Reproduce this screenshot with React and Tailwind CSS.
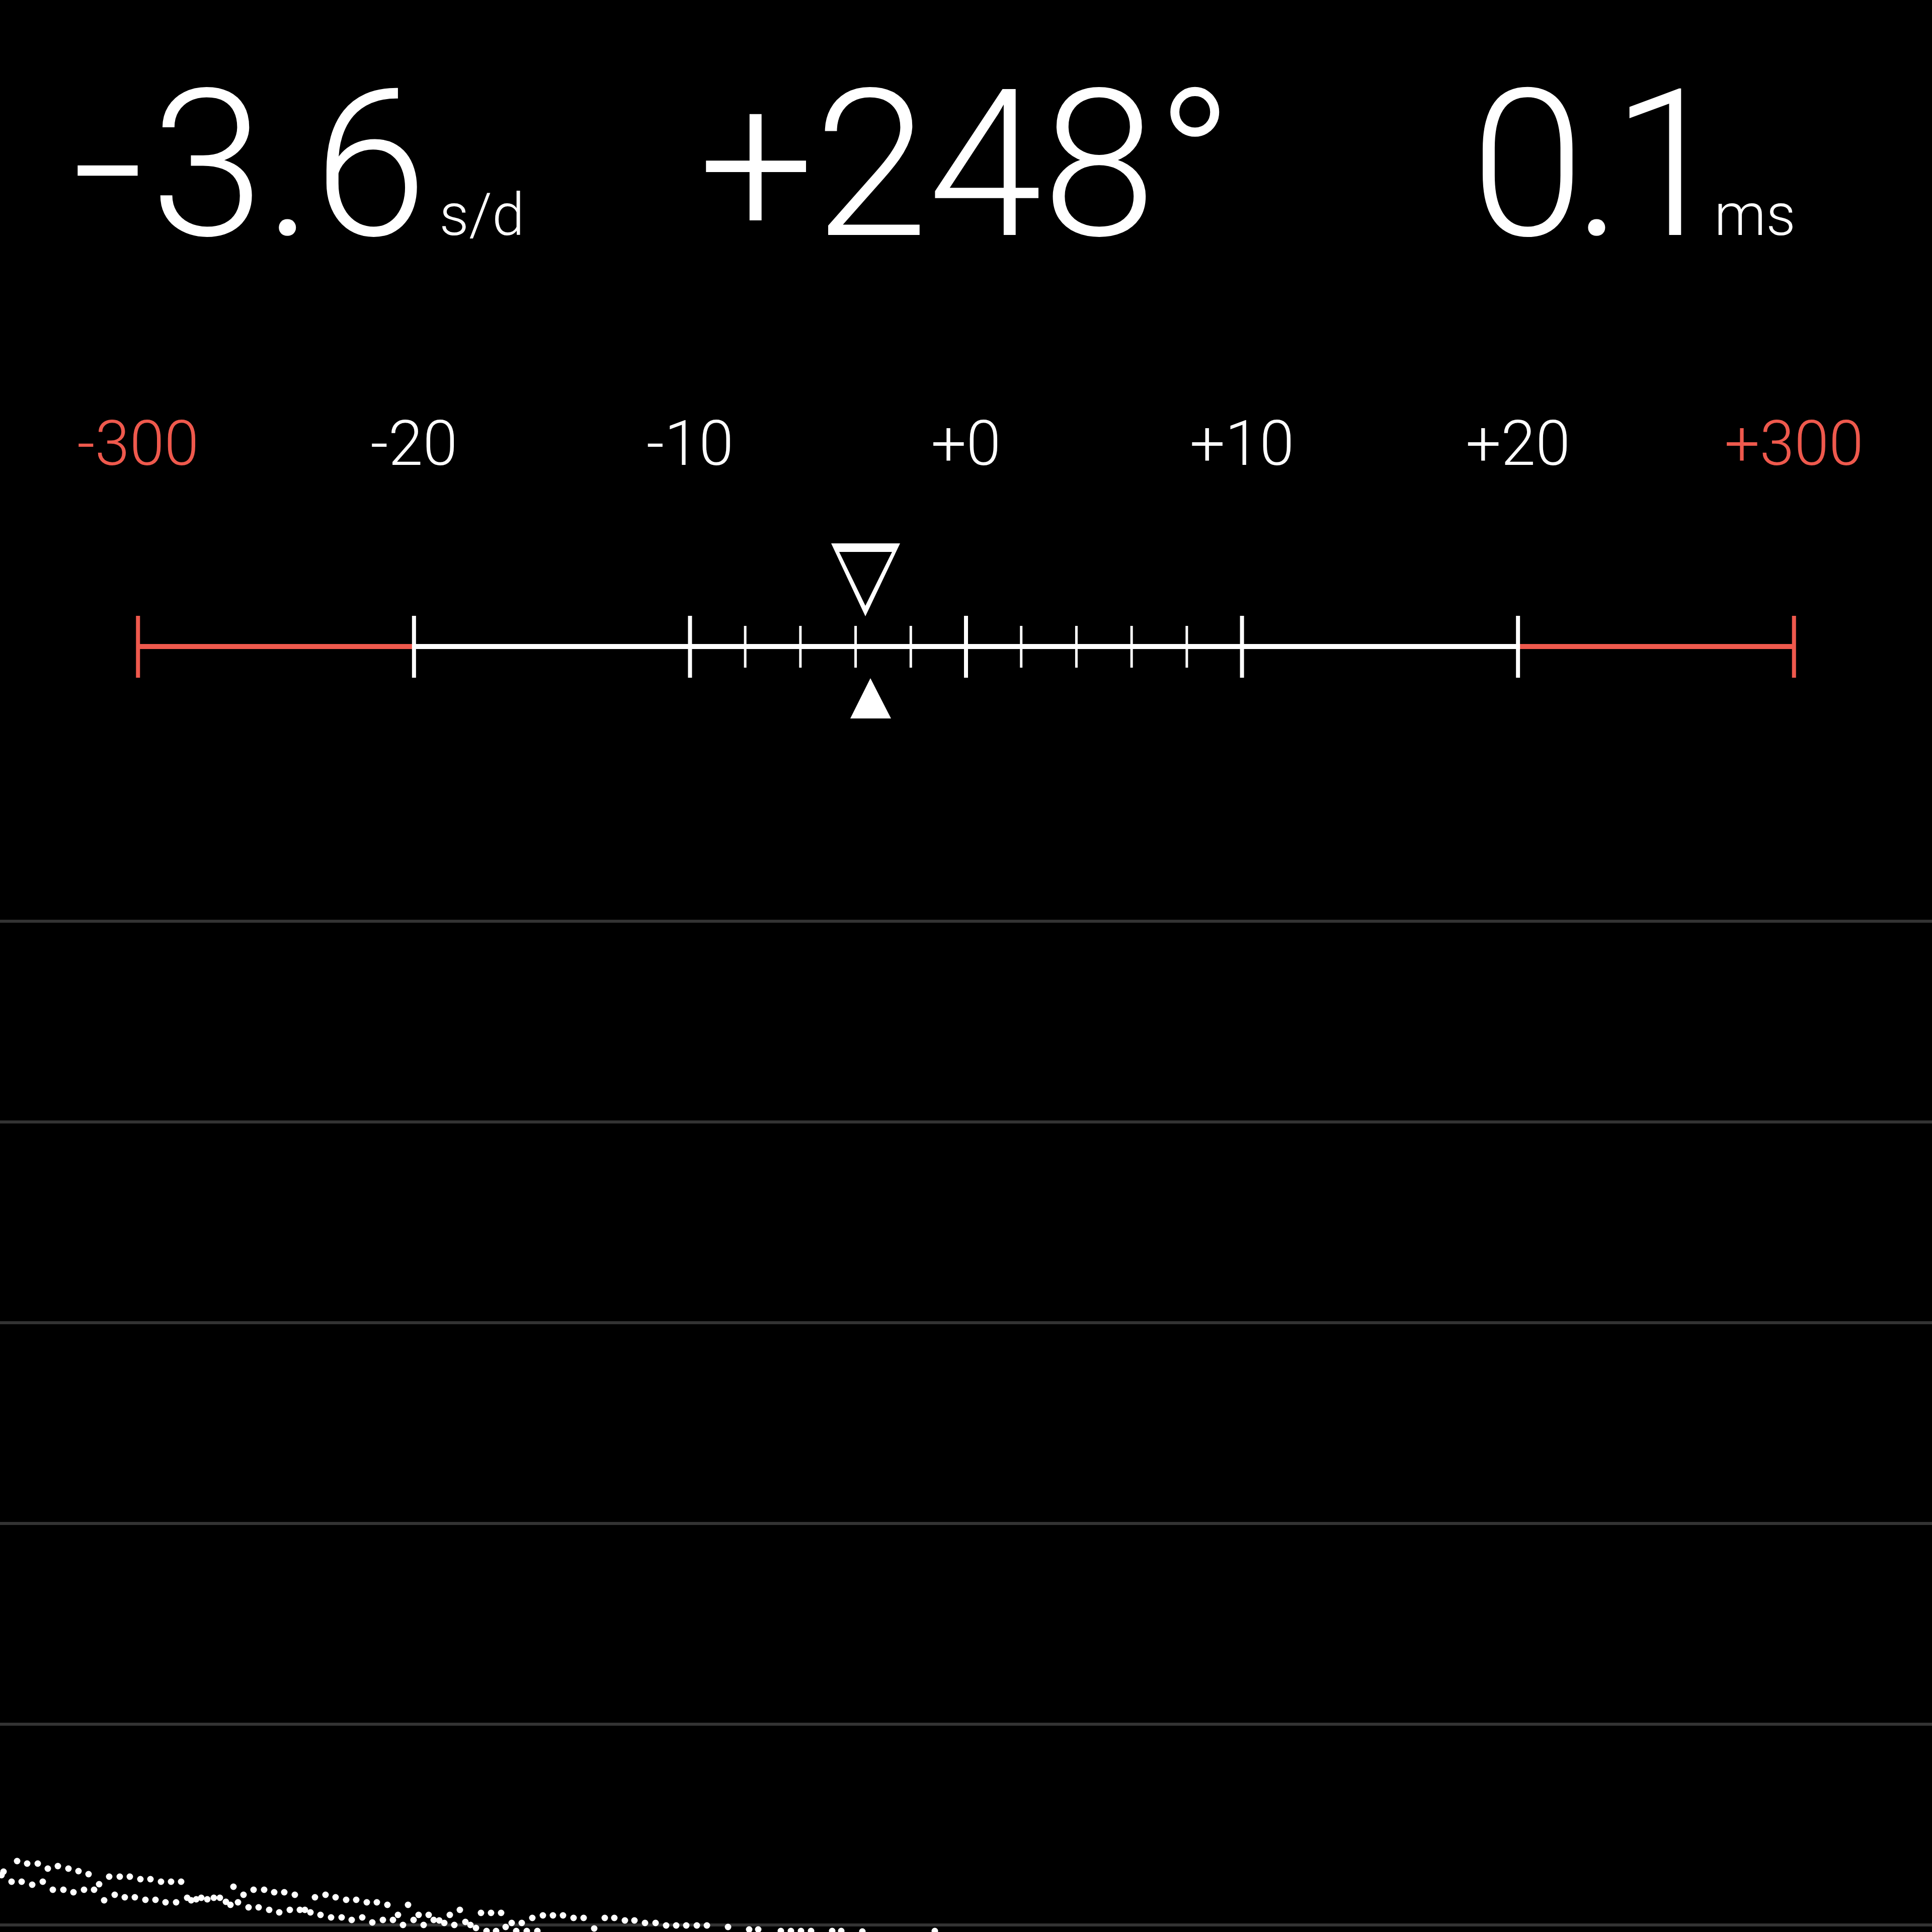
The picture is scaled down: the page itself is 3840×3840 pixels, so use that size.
import React from "react";

const labels = [
  { text: "-300", red: true },
  { text: "-20" },
  { text: "-10" },
  { text: "+0" },
  { text: "+10" },
  { text: "+20" },
  { text: "+300", red: true },
];

// trace points, page coordinates
const upper = [
  [7, 3720], [34, 3699], [54, 3704], [75, 3704], [95, 3714], [115, 3709], [136, 3714], [156, 3719], [176, 3725],
  [197, 3745], [217, 3730], [238, 3730], [258, 3730], [279, 3735], [299, 3735], [320, 3740], [340, 3740], [360, 3740],
  [464, 3750], [484, 3766], [504, 3756], [525, 3756], [545, 3761], [565, 3761], [586, 3766], [626, 3771], [647, 3766],
  [667, 3771], [688, 3776], [708, 3776], [729, 3781], [749, 3781], [770, 3786], [811, 3786], [791, 3806], [832, 3806],
  [852, 3806], [894, 3806], [914, 3796], [956, 3802], [976, 3802], [996, 3802], [1058, 3812], [1079, 3807],
  [1099, 3807], [1119, 3807], [1140, 3812], [1160, 3812], [1202, 3812], [1221, 3812], [1242, 3817], [1261, 3817],
  [1282, 3822], [1303, 3822], [1324, 3827], [1344, 3827], [1364, 3827], [1385, 3827], [1405, 3827], [1447, 3830],
  [1489, 3835], [1507, 3835], [1552, 3838], [1572, 3838], [1592, 3838], [1612, 3838], [1654, 3838], [1672, 3838],
  [1714, 3839], [1858, 3838],
];

const lower = [
  [3, 3727], [23, 3740], [43, 3740], [64, 3746], [85, 3740], [105, 3756], [126, 3756], [146, 3761], [167, 3756],
  [187, 3756], [207, 3777], [228, 3766], [248, 3771], [268, 3771], [289, 3776], [309, 3776], [329, 3781], [350, 3781],
  [372, 3772], [380, 3777], [390, 3775], [400, 3772], [412, 3775], [425, 3772], [437, 3772], [449, 3780], [458, 3786],
  [473, 3781], [494, 3791], [514, 3791], [535, 3796], [555, 3801], [576, 3796], [596, 3796], [606, 3796], [617, 3801],
  [637, 3806], [658, 3811], [679, 3811], [699, 3816], [720, 3811], [740, 3821], [761, 3816], [781, 3816], [801, 3826],
  [822, 3816], [842, 3826], [862, 3816], [873, 3817], [883, 3822], [903, 3826], [925, 3820], [935, 3826], [946, 3832],
  [967, 3838], [986, 3838], [1005, 3830], [1017, 3822], [1037, 3822], [1026, 3838], [1047, 3838], [1068, 3838],
  [1181, 3833],
];

const RED = "#ef594d";
const STEP = 3840 / 7;

const Gauge = () => {
  const majors = [0, 1, 2, 3, 4, 5, 6].map((i) => STEP / 2 + i * STEP);
  const minors = [];
  for (let k = 1; k <= 4; k++) {
    minors.push(majors[2] + (k * STEP) / 5);
    minors.push(majors[3] + (k * STEP) / 5);
  }
  return (
    <svg width="3840" height="380" viewBox="0 0 3840 380" className="block mt-[116px]">
      <rect x={majors[0]} y="220" width={majors[1] - majors[0]} height="10" fill={RED} />
      <rect x={majors[1]} y="220" width={majors[5] - majors[1]} height="10" fill="#fff" />
      <rect x={majors[5]} y="220" width={majors[6] - majors[5]} height="10" fill={RED} />
      {majors.map((x, i) => (
        <rect
          key={i}
          x={x - 4}
          y="164"
          width="8"
          height="123"
          fill={i === 0 || i === 6 ? RED : "#fff"}
        />
      ))}
      {minors.map((x, i) => (
        <rect key={i} x={x - 2.5} y="184" width="5" height="83" fill="#fff" />
      ))}
      <path
        d="M1652 20 L1789 20 L1720 165 Z M1668 37 L1720 144 L1773 37 Z"
        fill="#fff"
        fillRule="evenodd"
      />
      <path d="M1690 368 L1771 368 L1730 288 Z" fill="#fff" />
    </svg>
  );
};

export default function App() {
  return (
    <div className="w-[3840px] h-[3840px] bg-black text-white overflow-hidden font-['Roboto','Liberation_Sans',sans-serif] font-light">
      <div className="grid grid-cols-3 items-baseline pt-[124px] leading-none">
        <div className="flex items-baseline justify-self-start ml-[142px]">
          <span className="text-[408px]">
            <span className="inline-block mr-[40px] scale-x-125 origin-left">-</span>3.6
          </span>
          <span className="text-[116px] ml-[24px]">s/d</span>
        </div>
        <div className="flex items-baseline justify-self-center">
          <span className="text-[408px]">+248°</span>
        </div>
        <div className="flex items-baseline justify-self-end mr-[271px]">
          <span className="text-[408px] tracking-[-22px]">0.1</span>
          <span className="text-[116px]">ms</span>
        </div>
      </div>

      <div className="grid grid-cols-7 mt-[288px] text-[124px] leading-none">
        {labels.map((l) => (
          <div key={l.text} className={`text-center ${l.red ? "text-[#ef594d]" : "text-white"}`}>
            {l.text}
          </div>
        ))}
      </div>

      <Gauge />

      <div className="relative h-[2400px] flex flex-col pt-[388px] gap-[393px]">
        {[0, 1, 2, 3, 4, 5].map((i) => (
          <div key={i} className="h-[6px] bg-[#333333]" />
        ))}
        <svg
          width="3840"
          height="200"
          viewBox="0 3640 3840 200"
          className="absolute left-0 bottom-0"
        >
          {[...upper, ...lower].map(([x, y], i) => (
            <circle key={i} cx={x} cy={y} r="6.5" fill="#fff" />
          ))}
        </svg>
      </div>
    </div>
  );
}
